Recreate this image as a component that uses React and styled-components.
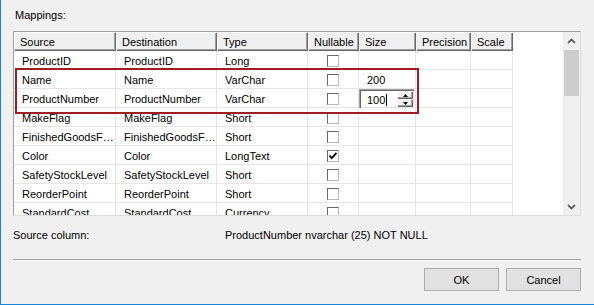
import React from 'react';
import styled, { createGlobalStyle } from 'styled-components';

const GlobalStyle = createGlobalStyle`
  html, body { margin: 0; padding: 0; background: #f0f0f0; }
  body {
    font-family: "Liberation Sans", Arial, sans-serif;
    font-size: 11px;
    color: #000;
  }
  * { box-sizing: border-box; }
`;

const Window = styled.div`
  width: 594px;
  height: 305px;
  background: #f0f0f0;
  border-left: 1px solid #1883d7;
  border-bottom: 1px solid #1883d7;
  padding: 9px 13px 0 12px;
  display: flex;
  flex-direction: column;
  overflow: hidden;
`;

const GroupLabel = styled.div`
  line-height: 13px;
  padding-left: 2px;
`;

const Grid = styled.div`
  position: relative;
  margin-top: 9px;
  height: 185px;
  flex-shrink: 0;
  display: flex;
  background: #fff;
  border: 1px solid;
  border-color: #a0a0a0 #dcdcdc #dcdcdc #a0a0a0;
`;

const TableArea = styled.div`
  flex: 1;
  min-width: 0;
  display: flex;
  flex-direction: column;
  overflow: hidden;
`;

const HeaderRow = styled.div`
  display: flex;
  height: 19px;
  flex-shrink: 0;
`;

const HeaderCell = styled.div`
  width: ${p => p.$w}px;
  height: 19px;
  flex-shrink: 0;
  background: #f0f0f0;
  padding: 1px 0 0 6px;
  line-height: 18px;
  white-space: nowrap;
  overflow: hidden;
  box-shadow: inset 1px 1px #ffffff, inset -1px -1px #696969, inset -2px -2px #a0a0a0;
`;

const Row = styled.div`
  display: flex;
  height: 19px;
  flex-shrink: 0;
`;

const Cell = styled.div`
  position: relative;
  width: ${p => p.$w}px;
  height: 19px;
  flex-shrink: 0;
  border-right: 1px solid #e6e6e6;
  border-bottom: 1px solid #e6e6e6;
  padding: 1px 0 0 8px;
  line-height: 18px;
  white-space: nowrap;
  overflow: ${p => (p.$open ? 'visible' : 'hidden')};
  text-overflow: ellipsis;
`;

const CheckCell = styled(Cell)`
  display: flex;
  align-items: center;
  justify-content: center;
  padding: 1px 0 0 0;
`;

const CheckBox = styled.div`
  width: 12px;
  height: 12px;
  background: #fff;
  border: 1px solid;
  border-color: #6a6a6a #b9b9b9 #b9b9b9 #6a6a6a;
  display: flex;
`;

const Spinner = styled.div`
  position: absolute;
  left: 0;
  top: 0;
  width: 55px;
  height: 19px;
  background: #fff;
  display: flex;
  padding: 2px 1px 1px 2px;
  box-shadow: inset 1px 1px #a0a0a0, inset 2px 2px #696969, inset -1px -1px #e3e3e3;
  z-index: 1;
`;

const SpinText = styled.div`
  flex: 1;
  display: flex;
  align-items: center;
  padding: 1px 0 0 6px;
  line-height: 14px;
`;

const Caret = styled.span`
  display: inline-block;
  width: 1px;
  height: 12px;
  background: #000;
  margin-left: 1px;
`;

const SpinButtons = styled.div`
  width: 16px;
  display: flex;
  flex-direction: column;
`;

const SpinButton = styled.div`
  flex: 1;
  background: #f0f0f0;
  display: flex;
  align-items: center;
  justify-content: center;
  box-shadow: inset 1px 1px #ffffff, inset -1px -1px #696969, inset -2px -2px #a0a0a0;
`;

const ScrollBar = styled.div`
  width: 17px;
  flex-shrink: 0;
  background: #f0f0f0;
  display: flex;
  flex-direction: column;
`;

const ScrollButton = styled.div`
  height: 17px;
  flex-shrink: 0;
  display: flex;
  align-items: center;
  justify-content: center;
  margin-top: ${p => (p.$end ? 'auto' : '0')};
`;

const Thumb = styled.div`
  margin: 1px 1px 0 1px;
  height: 46px;
  background: #cdcdcd;
`;

const Highlight = styled.div`
  position: absolute;
  left: 1px;
  top: 36px;
  width: 404px;
  height: 46px;
  border: 2px solid #9e1c23;
  pointer-events: none;
  z-index: 2;
`;

const InfoRow = styled.div`
  margin-top: 13px;
  display: flex;
  line-height: 13px;
`;

const InfoLabel = styled.div`
  width: 212px;
`;

const Separator = styled.div`
  margin-top: 17px;
  border-top: 1px solid #a0a0a0;
  border-bottom: 1px solid #ffffff;
`;

const ButtonRow = styled.div`
  margin-top: 7px;
  display: flex;
  justify-content: flex-end;
  gap: 7px;
`;

const Button = styled.button`
  width: 75px;
  height: 23px;
  background: #e1e1e1;
  border: 1px solid #adadad;
  font-family: "Liberation Sans", Arial, sans-serif;
  font-size: 11px;
  color: #000;
  padding: 0;
  margin: 0;
`;

const columns = [
  { key: 'source', label: 'Source', width: 102 },
  { key: 'dest', label: 'Destination', width: 101 },
  { key: 'type', label: 'Type', width: 91 },
  { key: 'nullable', label: 'Nullable', width: 51 },
  { key: 'size', label: 'Size', width: 57 },
  { key: 'precision', label: 'Precision', width: 55 },
  { key: 'scale', label: 'Scale', width: 42 },
];

const rows = [
  { source: 'ProductID', dest: 'ProductID', type: 'Long', nullable: false, size: '' },
  { source: 'Name', dest: 'Name', type: 'VarChar', nullable: false, size: '200' },
  { source: 'ProductNumber', dest: 'ProductNumber', type: 'VarChar', nullable: false, size: '100', editing: true },
  { source: 'MakeFlag', dest: 'MakeFlag', type: 'Short', nullable: false, size: '' },
  { source: 'FinishedGoodsFlag', dest: 'FinishedGoodsFlag', type: 'Short', nullable: false, size: '' },
  { source: 'Color', dest: 'Color', type: 'LongText', nullable: true, size: '' },
  { source: 'SafetyStockLevel', dest: 'SafetyStockLevel', type: 'Short', nullable: false, size: '' },
  { source: 'ReorderPoint', dest: 'ReorderPoint', type: 'Short', nullable: false, size: '' },
  { source: 'StandardCost', dest: 'StandardCost', type: 'Currency', nullable: false, size: '' },
];

const Chevron = ({ down }) => (
  <svg width="9" height="6" viewBox="0 0 9 6">
    <path
      d={down ? 'M1 1 L4.5 4.5 L8 1' : 'M1 5 L4.5 1.5 L8 5'}
      fill="none"
      stroke="#606060"
      strokeWidth="1.8"
    />
  </svg>
);

const Tri = ({ down }) => (
  <svg width="5" height="3" viewBox="0 0 5 3">
    <path d={down ? 'M0 0 L5 0 L2.5 3Z' : 'M0 3 L5 3 L2.5 0Z'} fill="#000" />
  </svg>
);

const Check = () => (
  <svg width="10" height="10" viewBox="0 0 10 10">
    <path d="M1.5 4.5 L3.7 7.2 L8.5 1.8" fill="none" stroke="#000" strokeWidth="1.8" />
  </svg>
);

function renderCell(col, row) {
  if (col.key === 'nullable') {
    return (
      <CheckCell key={col.key} $w={col.width}>
        <CheckBox>{row.nullable && <Check />}</CheckBox>
      </CheckCell>
    );
  }
  if (col.key === 'size' && row.editing) {
    return (
      <Cell key={col.key} $w={col.width} $open>
        <Spinner>
          <SpinText>
            {row.size}
            <Caret />
          </SpinText>
          <SpinButtons>
            <SpinButton><Tri /></SpinButton>
            <SpinButton><Tri down /></SpinButton>
          </SpinButtons>
        </Spinner>
      </Cell>
    );
  }
  return (
    <Cell key={col.key} $w={col.width}>
      {row[col.key] || ''}
    </Cell>
  );
}

export default function App() {
  return (
    <>
      <GlobalStyle />
      <Window>
        <GroupLabel>Mappings:</GroupLabel>
        <Grid>
          <TableArea>
            <HeaderRow>
              {columns.map(c => (
                <HeaderCell key={c.key} $w={c.width}>{c.label}</HeaderCell>
              ))}
            </HeaderRow>
            {rows.map(r => (
              <Row key={r.source}>{columns.map(c => renderCell(c, r))}</Row>
            ))}
          </TableArea>
          <ScrollBar>
            <ScrollButton><Chevron /></ScrollButton>
            <Thumb />
            <ScrollButton $end><Chevron down /></ScrollButton>
          </ScrollBar>
          <Highlight />
        </Grid>
        <InfoRow>
          <InfoLabel>Source column:</InfoLabel>
          <div>ProductNumber nvarchar (25) NOT NULL</div>
        </InfoRow>
        <Separator />
        <ButtonRow>
          <Button>OK</Button>
          <Button>Cancel</Button>
        </ButtonRow>
      </Window>
    </>
  );
}
